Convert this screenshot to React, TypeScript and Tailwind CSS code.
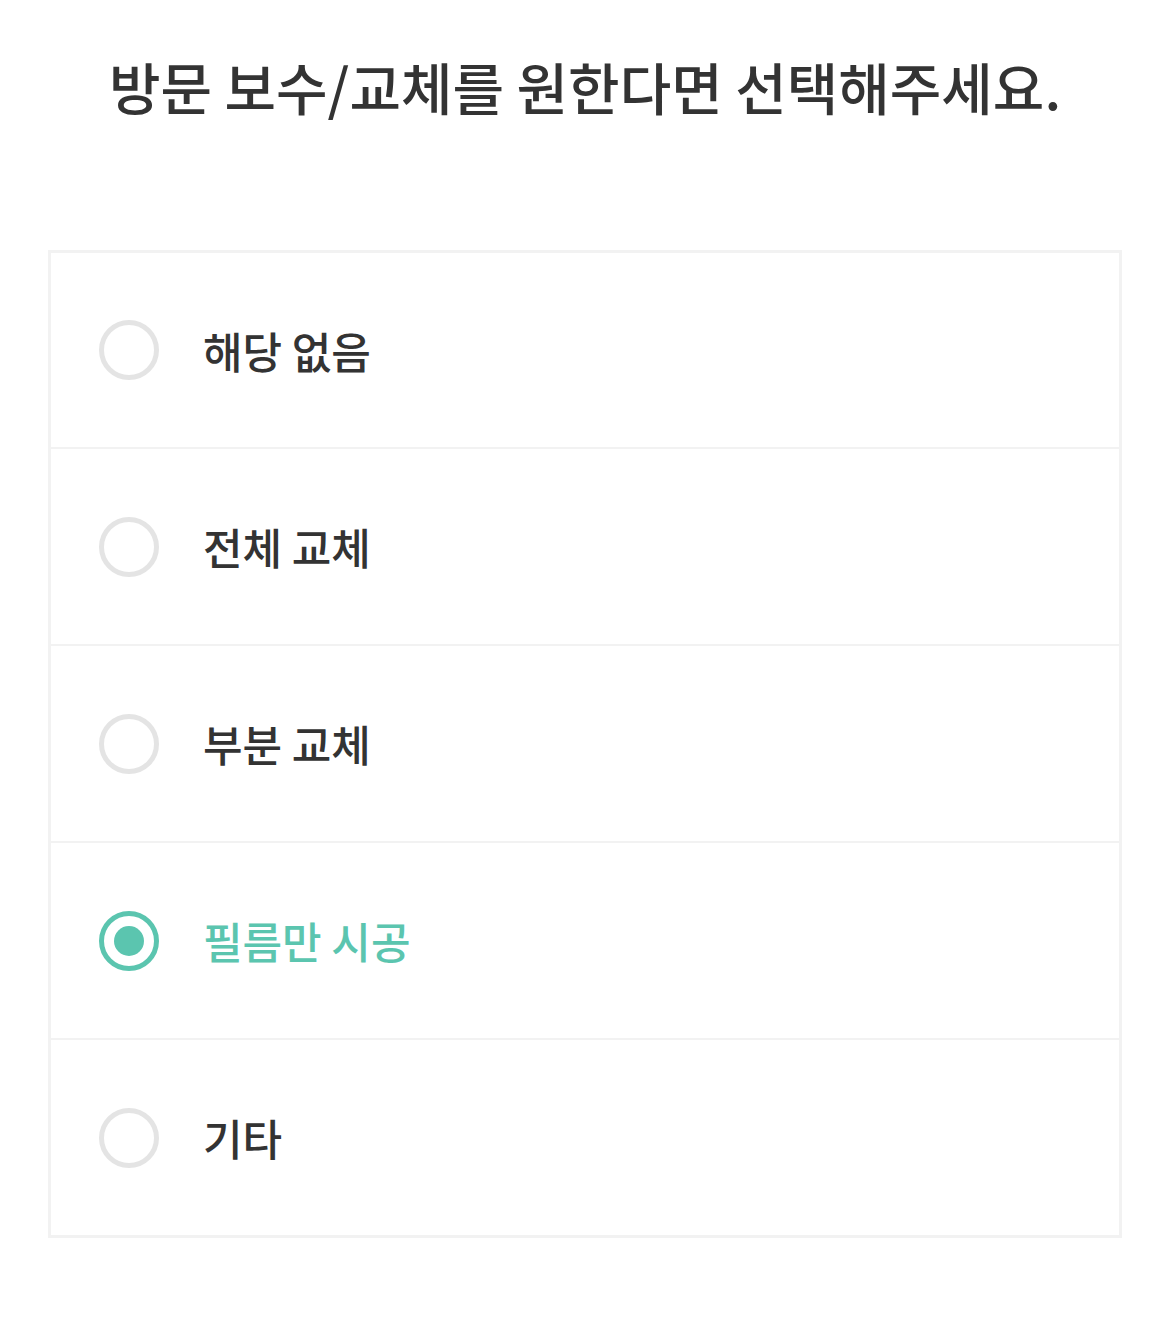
const options = ["해당 없음", "전체 교체", "부분 교체", "필름만 시공", "기타"];

export default function App() {
  const selected = 3;
  return (
    <div
      className="min-h-[1322px] bg-white px-12 pt-[50px]"
      style={{ fontFamily: '"Noto Sans CJK KR", "Noto Sans", sans-serif' }}
    >
      <h1 className="whitespace-nowrap text-center text-[56px] font-medium leading-[72px] text-[#333333]">
        방문 보수/교체를 원한다면 선택해주세요.
      </h1>
      <div className="mt-[128px] border-[3px] border-[#f2f2f2]">
        {options.map((label, i) => {
          const on = i === selected;
          return (
            <div
              key={label}
              className={`flex items-center pl-[48px] ${
                i > 0 ? "h-[197px] border-t-[2px] border-[#f2f2f2]" : "h-[194px]"
              }`}
            >
              <div
                className={`flex h-[60px] w-[60px] shrink-0 items-center justify-center rounded-full border-[5px] ${
                  on ? "border-[#5bc5af]" : "border-[#e4e4e4]"
                }`}
              >
                {on && <div className="h-[30px] w-[30px] rounded-full bg-[#5bc5af]" />}
              </div>
              <span
                className={`ml-[44px] text-[43px] font-medium leading-none ${
                  on ? "text-[#5bc5af]" : "text-[#333333]"
                }`}
              >
                {label}
              </span>
            </div>
          );
        })}
      </div>
    </div>
  );
}
